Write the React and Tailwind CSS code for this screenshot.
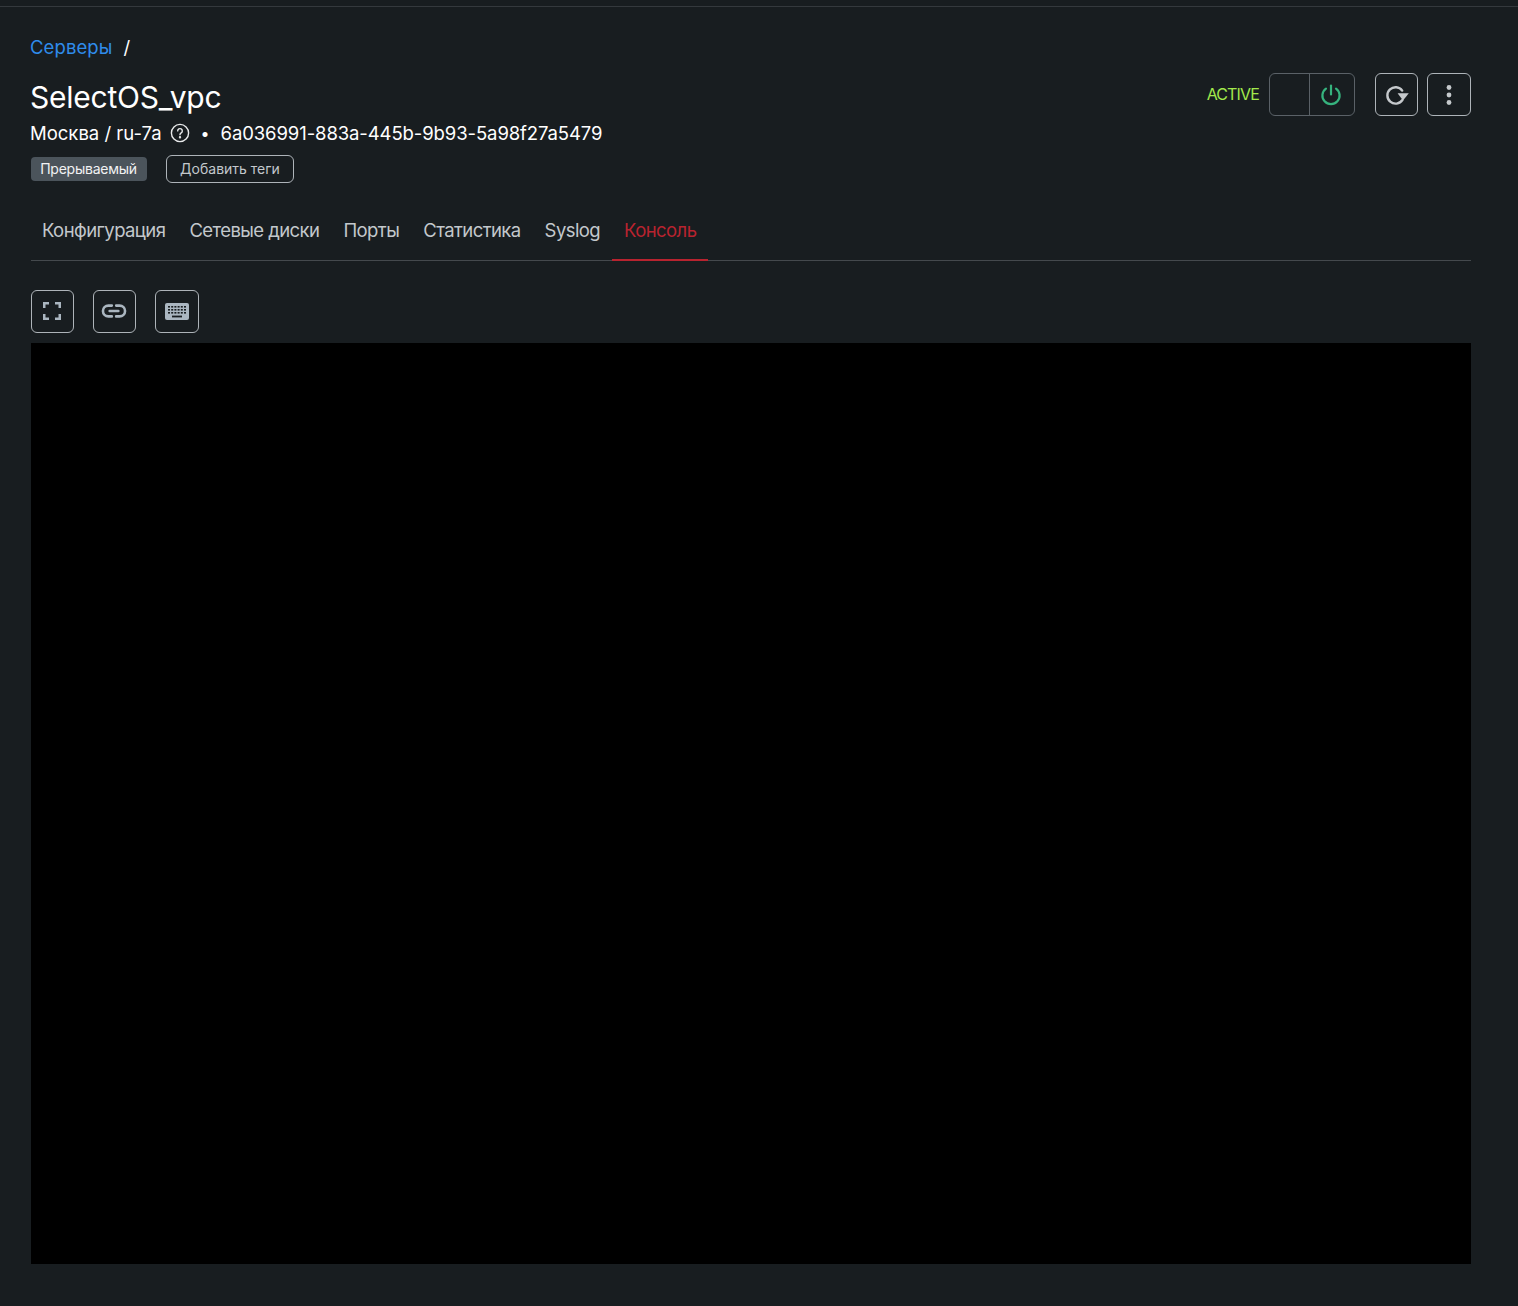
import React from "react";

function IconBtn({ children, className = "" }) {
  return (
    <button className={"flex h-[43px] items-center justify-center rounded-[6px] border border-[#aeb4b9] bg-transparent " + className}>
      {children}
    </button>
  );
}

const tabs = ["Конфигурация", "Сетевые диски", "Порты", "Статистика", "Syslog"];

export default function App() {
  return (
    <div className="min-h-[1306px] bg-[#181d20] font-['Inter','Noto_Sans',sans-serif] text-white">
      <div className="h-[7px] border-b border-[#34393d]" />
      <div className="pl-[31px] pr-[47px] pt-[28px]">
        <div className="-ml-px flex h-[24px] items-center text-[18.5px] leading-[24px] tracking-[0.1px]">
          <span className="text-[#2f8ceb]">Серверы</span>
          <span className="ml-[11px] text-white">/</span>
        </div>

        <div className="mt-[20px] flex items-start justify-between">
          <div className="min-w-0">
            <h1 className="-ml-px h-[36px] text-[30px] font-normal leading-[36px] tracking-[-0.25px]">SelectOS_vpc</h1>
            <div className="-ml-px mt-[5px] flex h-[26px] items-center text-[18.5px] leading-[26px] tracking-[-0.08px]">
              <span className="tracking-[0px]">Москва / ru-7a</span>
              <svg className="ml-[8px]" width="20" height="20" viewBox="0 0 20 20" fill="none" stroke="#e8eaeb" strokeWidth="1.4" strokeLinecap="round">
                <circle cx="10" cy="10" r="8.6" />
                <path d="M7.7 7.9a2.3 2.3 0 1 1 3.5 2c-.8.5-1.2.9-1.2 1.8" />
                <circle cx="10" cy="14.2" r="0.5" fill="#e8eaeb" />
              </svg>
              <span className="ml-[11px] mr-[11px] text-[16px]">•</span>
              <span className="tracking-[-0.1px]">6a036991-883a-445b-9b93-5a98f27a5479</span>
            </div>
            <div className="mt-[9px] flex h-[28px] items-center">
              <span className="flex h-[24px] w-[116px] items-center justify-center rounded-[4px] bg-[#4b545b] pb-[2px] pr-[1px] text-[14px] tracking-[-0.25px] text-[#f1f2f3]">Прерываемый</span>
              <button className="ml-[19px] h-[28px] w-[128px] rounded-[6px] border border-[#aeb4b9] pb-[2px] text-[14px] tracking-[0px] text-[#c3c8cc]">Добавить теги</button>
            </div>
          </div>

          <div className="mt-[-6px] flex items-center">
            <span className="mr-[10px] pb-[1px] text-[16px] tracking-[-0.85px] text-[#a2e94c]">ACTIVE</span>
            <div className="flex h-[43px] w-[86px] rounded-[6px] border border-[#5a6167]">
              <div className="w-[40px] border-r border-[#5a6167]" />
              <div className="flex flex-1 items-center justify-center pr-[2px]">
                <svg width="22" height="22" viewBox="0 0 22 22" fill="none" stroke="#36b37e" strokeWidth="2.2" strokeLinecap="round">
                  <path d="M11 1.5v9" />
                  <path d="M6 4.6a8.6 8.6 0 1 0 10 0" />
                </svg>
              </div>
            </div>
            <IconBtn className="ml-[20px] w-[43px]">
              <svg width="26" height="24" viewBox="0 0 26 24" fill="none">
                <path d="M18.2 7.6A8.2 8.2 0 1 0 18.4 17" stroke="#c5c9cc" strokeWidth="2.4" strokeLinecap="round" />
                <path d="M24.8 10.2H13.6l5.4 7.2z" fill="#c5c9cc" />
              </svg>
            </IconBtn>
            <IconBtn className="ml-[9px] w-[44px]">
              <svg width="6" height="22" viewBox="0 0 6 22" fill="#c5c9cc">
                <circle cx="3" cy="3.5" r="2.4" />
                <circle cx="3" cy="11" r="2.4" />
                <circle cx="3" cy="18.5" r="2.4" />
              </svg>
            </IconBtn>
          </div>
        </div>

        <div className="mt-[12px] flex h-[66px] w-[1440px] items-stretch border-b border-[#44494d] text-[18.5px] tracking-[-0.58px]">
          <div className="-ml-px flex items-stretch">
            {tabs.map((t) => (
              <div key={t} className="flex items-center px-[12px] pt-[7px] text-[#c3c8cc]">{t}</div>
            ))}
            <div className="relative flex items-center px-[12px] pt-[7px] text-[#b8232f]">
              Консоль
              <div className="absolute inset-x-0 bottom-[-1px] h-[2px] bg-[#b8232f]" />
            </div>
          </div>
        </div>

        <div className="mt-[29px] flex gap-[19px]">
          <IconBtn className="w-[43px] pr-[2px] pb-[1px]">
            <svg width="18" height="18" viewBox="0 0 18 18" fill="none" stroke="#aab6c0" strokeWidth="2.6">
              <path d="M1.2 6V1.2H6M12 1.2h4.8V6M16.8 12v4.8H12M6 16.8H1.2V12" />
            </svg>
          </IconBtn>
          <IconBtn className="w-[43px] pr-[1px] pb-[1px]">
            <svg width="26" height="26" viewBox="0 0 24 24" fill="none" stroke="#aab6c0" strokeWidth="2.4" strokeLinecap="round">
              <path d="M10 7H6.8a5 5 0 0 0 0 10H10M14 7h3.2a5 5 0 0 1 0 10H14M8 12h8" />
            </svg>
          </IconBtn>
          <IconBtn className="w-[44px] pb-[1px]">
            <svg width="24" height="17" viewBox="0 0 24 17">
              <rect x="0" y="0" width="24" height="17" rx="2" fill="#aab6c0" />
              <g fill="#181d20">
                <rect x="3" y="3" width="2" height="1.6" /><rect x="6.2" y="3" width="2" height="1.6" /><rect x="9.4" y="3" width="2" height="1.6" /><rect x="12.6" y="3" width="2" height="1.6" /><rect x="15.8" y="3" width="2" height="1.6" /><rect x="19" y="3" width="2" height="1.6" />
                <rect x="3" y="6" width="2" height="1.6" /><rect x="6.2" y="6" width="2" height="1.6" /><rect x="9.4" y="6" width="2" height="1.6" /><rect x="12.6" y="6" width="2" height="1.6" /><rect x="15.8" y="6" width="2" height="1.6" /><rect x="19" y="6" width="2" height="1.6" />
                <rect x="3" y="9" width="2" height="1.6" /><rect x="6.2" y="9" width="2" height="1.6" /><rect x="9.4" y="9" width="2" height="1.6" /><rect x="12.6" y="9" width="2" height="1.6" /><rect x="15.8" y="9" width="2" height="1.6" /><rect x="19" y="9" width="2" height="1.6" />
                <rect x="7" y="12.6" width="10" height="1.8" />
              </g>
            </svg>
          </IconBtn>
        </div>

        <div className="mt-[10px] h-[921px] w-[1440px] bg-black" />
      </div>
    </div>
  );
}
